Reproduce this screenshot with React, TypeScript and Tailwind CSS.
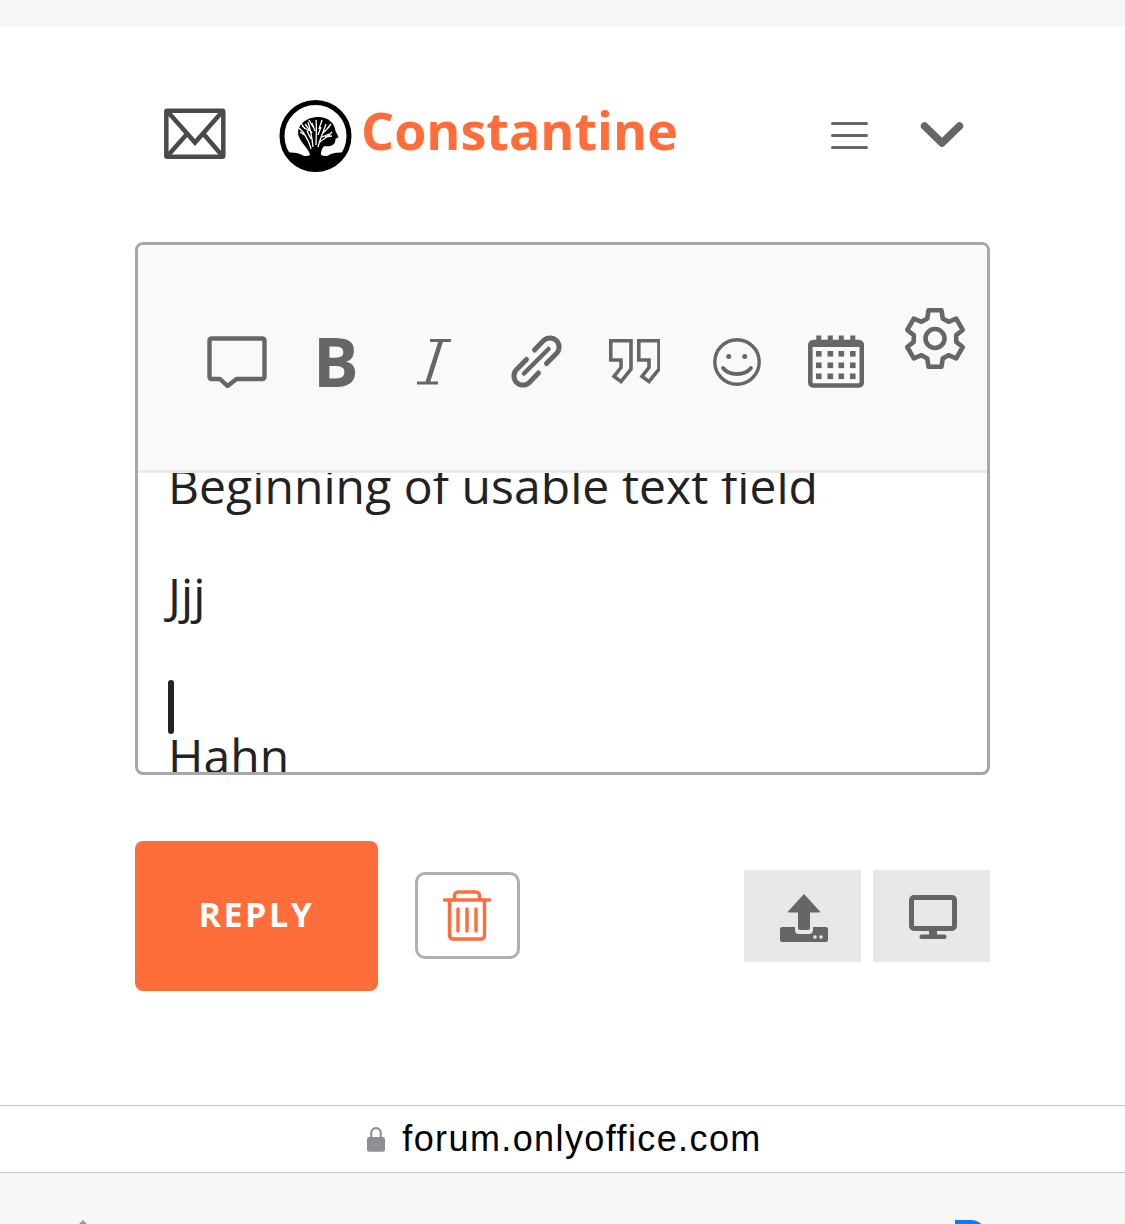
import React from "react";

const gearPath = (() => {
  const c = 31;
  const parts: string[] = [];
  for (let i = 0; i < 6; i++) {
    const a = -90 + i * 60;
    const pts: [number, number][] = [
      [a - 21, 21.5],
      [a - 13, 29],
      [a + 13, 29],
      [a + 21, 21.5],
    ];
    pts.forEach(([deg, r]) => {
      const t = (deg * Math.PI) / 180;
      parts.push(`${parts.length ? "L" : "M"}${(c + r * Math.cos(t)).toFixed(2)} ${(c + 0.5 + r * Math.sin(t)).toFixed(2)}`);
    });
  }
  return parts.join(" ") + "Z";
})();

function Mail() {
  return (
    <svg width="62" height="52" viewBox="0 0 62 52" fill="none" stroke="#4a4a4a" strokeWidth="4.5">
      <rect x="2.3" y="2.8" width="57" height="46" rx="1" />
      <path d="M4 4L31 34.5L58 4" />
      <path d="M3.5 48L22.5 26.5M58.5 48L40 26.5" />
    </svg>
  );
}

function Logo() {
  return (
    <svg width="80" height="80" viewBox="0 0 80 80" className="shrink-0">
      <circle cx="40.5" cy="41" r="33.5" fill="#fff" stroke="#000" strokeWidth="5" />
      <path d="M35 60C34 54 27 49 24 42C20 31 31 22 43 22C54 22 60 29 60.5 36L63.5 42L60.5 44C60.5 50 56 52 50 51C47 52 46 56 46 60C50 62 53 61 56 59C61 57 65 58 70 57C64 68 52 75 40.5 75C29 75 17 68 11 57C16 58 20 57 25 59C28 61 32 62 35 60Z" fill="#000" />
      <path d="M36 54C34 46 31 42 28 37M38 52C37 42 36 36 33 27M41 50C41 42 42 34 41 25M43 52C45 44 48 38 51 29M45 47C48 44 52 43 57 37M31 41L25 37M34 36L27 31M30 34L26 28M38 32L34 25M37 38L30 29M44 34L47 25M48 38L55 31M47 42L54 39M52 34L56 29M29 38L24 33M36 44L32 36M43 40L46 32M40 36L37 28M50 42L57 41" fill="none" stroke="#fff" strokeWidth="1.3" />
    </svg>
  );
}

function Chat() {
  return (
    <svg width="60" height="52" viewBox="0 0 60 52" fill="none" stroke="#666" strokeWidth="4.4" strokeLinejoin="round">
      <path d="M4.5 2.5H55.5a2 2 0 0 1 2 2V41a2 2 0 0 1-2 2H29.5L20.5 50 13 43H4.5a2 2 0 0 1-2-2V4.5a2 2 0 0 1 2-2z" />
    </svg>
  );
}

function Italic() {
  return (
    <svg width="34" height="46" viewBox="0 0 34 46" fill="none" stroke="#666">
      <path d="M13 1.5H34M0 44H21" strokeWidth="3" />
      <path d="M24 1.5L10.5 44" strokeWidth="4.5" />
    </svg>
  );
}

function LinkIcon() {
  return (
    <svg width="65" height="65" viewBox="0 0 65 65" fill="none" stroke="#666" strokeWidth="5" strokeLinecap="round">
      <path d="M30.5 21L39.6 11.6A9 9 0 0 1 52.4 24.4L42.5 34.5" />
      <path d="M22.5 30.5L12.6 40.6A9 9 0 0 0 25.4 53.4L34.5 44" />
      <path d="M20 44.5L44.5 20" strokeWidth="4.5" />
    </svg>
  );
}

function Quote() {
  return (
    <svg width="51" height="45" viewBox="0 0 51 45" fill="none" stroke="#666" strokeWidth="3.6">
      <path d="M1.8 1.8H22V30L12 42.5L5 37.5L12 28.5V21H1.8Z" />
      <path d="M29.8 1.8H50V30L40 42.5L33 37.5L40 28.5V21H29.8Z" />
    </svg>
  );
}

function Smile() {
  return (
    <svg width="48" height="48" viewBox="0 0 48 48" fill="none" stroke="#666">
      <circle cx="24" cy="24" r="22.2" strokeWidth="3.4" />
      <circle cx="15.7" cy="18.5" r="2.5" fill="#666" stroke="none" />
      <circle cx="31.7" cy="18.5" r="2.5" fill="#666" stroke="none" />
      <path d="M10 30C16 38 32 38 38 30" strokeWidth="3.8" strokeLinecap="round" />
    </svg>
  );
}

function Calendar() {
  const xs = [8, 19.5, 30.5, 42];
  const ys = [16, 27.5, 38.5];
  return (
    <svg width="56" height="53" viewBox="0 0 56 53" fill="#666">
      <rect x="2.3" y="7" width="51.5" height="43.5" rx="3" fill="none" stroke="#666" strokeWidth="4.6" />
      <rect x="2" y="6" width="52" height="6" />
      {xs.map((x) => (
        <rect key={`t${x}`} x={x + 0.3} y="0.5" width="5" height="7" />
      ))}
      {xs.map((x) =>
        ys.map((y) => <rect key={`${x}-${y}`} x={x} y={y} width="5.6" height="5.6" />)
      )}
    </svg>
  );
}

function Gear() {
  return (
    <svg width="62" height="64" viewBox="0 0 62 64" fill="none" stroke="#666" strokeWidth="4.6" strokeLinejoin="round">
      <path d={gearPath} />
      <circle cx="31" cy="31.5" r="9.5" />
    </svg>
  );
}

function Trash() {
  return (
    <svg width="48" height="51" viewBox="0 0 48 51" fill="none" stroke="#ff6d3b" strokeWidth="3.4" strokeLinecap="round">
      <path d="M1.5 10H46.5" />
      <path d="M11.5 9V5.5a3.5 3.5 0 0 1 3.5-3.5H33a3.5 3.5 0 0 1 3.5 3.5V9" />
      <path d="M6.5 10V45.5a3.5 3.5 0 0 0 3.5 3.5H38a3.5 3.5 0 0 0 3.5-3.5V10" />
      <path d="M15 19V41M24 19V41M33 19V41" />
    </svg>
  );
}

function Upload() {
  return (
    <svg width="48" height="48" viewBox="0 0 48 48">
      <path d="M2 33H15V36a4 4 0 0 0 4 4H29a4 4 0 0 0 4-4V33H46a2 2 0 0 1 2 2V46a2 2 0 0 1-2 2H2a2 2 0 0 1-2-2V35a2 2 0 0 1 2-2Z" fill="#666" />
      <path d="M24 0L40 17.5a.5.5 0 0 1-.5 1H30V34a2 2 0 0 1-2 2H20a2 2 0 0 1-2-2V18.5H8.5a.5.5 0 0 1-.5-1Z" fill="#666" />
      <circle cx="35" cy="43" r="1.8" fill="#e8e8e8" />
      <circle cx="41" cy="43" r="1.8" fill="#e8e8e8" />
    </svg>
  );
}

function Monitor() {
  return (
    <svg width="48" height="44" viewBox="0 0 48 44" fill="#666">
      <rect x="2.5" y="2.5" width="43" height="31" rx="2.5" fill="none" stroke="#666" strokeWidth="5" />
      <rect x="20" y="34" width="8" height="7" />
      <rect x="10.5" y="39.5" width="27" height="4.5" rx="2" />
    </svg>
  );
}

export default function App() {
  return (
    <div className="w-[1125px] h-[1224px] overflow-hidden flex flex-col bg-white font-['Open_Sans',sans-serif]">
      <div className="h-[26px] shrink-0 bg-[#f6f6f6]" />

      <main className="px-[135px] shrink-0">
        <header className="h-[216px] flex items-center pl-[29px]">
          <Mail />
          <div className="ml-[49px] mt-[2px] flex items-center">
            <Logo />
            <span className="ml-[6px] -mt-[10px] text-[52px] leading-none font-bold text-[#ff6d3b]">Constantine</span>
          </div>
          <div className="ml-auto mr-[26px] mt-[2px] flex items-center">
            <div className="w-[37px] flex flex-col gap-[9px]">
              <div className="h-[3px] rounded-full bg-[#666]" />
              <div className="h-[3px] rounded-full bg-[#666]" />
              <div className="h-[3px] rounded-full bg-[#666]" />
            </div>
            <svg className="ml-[52px]" width="44" height="28" viewBox="0 0 44 28" fill="none" stroke="#666" strokeWidth="7.5" strokeLinecap="round" strokeLinejoin="round">
              <path d="M4.5 5L22 22L39.5 5" />
            </svg>
          </div>
        </header>

        <section className="h-[533px] border-[3px] border-[#a8a8a8] rounded-[8px] overflow-hidden flex flex-col">
          <div className="h-[228px] shrink-0 bg-[#f9f9f9] border-b-[3px] border-[#ebebeb] flex items-center pl-[69px] pt-[8px]">
            <Chat />
            <span className="ml-[46px] w-[39px] text-[68px] leading-none font-bold text-[#666] -mt-[2px]">B</span>
            <div className="ml-[65px]"><Italic /></div>
            <div className="ml-[53px]"><LinkIcon /></div>
            <div className="ml-[40px]"><Quote /></div>
            <div className="ml-[53px]"><Smile /></div>
            <div className="ml-[47px]"><Calendar /></div>
            <div className="ml-[40px] self-start mt-[54px]"><Gear /></div>
          </div>
          <div className="flex-1 overflow-hidden pl-[30px] text-[#222] text-[48px] leading-[54.3px] tracking-[0.07px] whitespace-nowrap">
            <div className="-mt-[14px]">
              <div>Beginning of usable text field</div>
              <div className="h-[54.3px]" />
              <div>Jjj</div>
              <div className="h-[54.3px]" />
              <div className="h-[49px]">
                <div className="w-[6px] h-[54px] mt-[4px] rounded-full bg-[#222]" />
              </div>
              <div>Hahn</div>
            </div>
          </div>
        </section>

        <div className="mt-[66px] flex items-center">
          <button className="w-[243px] h-[150px] rounded-[8px] bg-[#ff6d3b] text-white text-[34px] font-bold tracking-[2.5px] pb-[3px]">REPLY</button>
          <button className="ml-[37px] mb-[2px] w-[105px] h-[87px] rounded-[10px] border-[3px] border-[#b0b0b0] bg-white flex items-center justify-center pr-[2px]">
            <Trash />
          </button>
          <div className="ml-auto flex gap-[12px]">
            <div className="w-[117px] h-[92px] bg-[#e8e8e8] flex items-center justify-center pl-[3px] pt-[4px]"><Upload /></div>
            <div className="w-[117px] h-[92px] bg-[#e8e8e8] flex items-center justify-center pl-[2px] pt-[2px]"><Monitor /></div>
          </div>
        </div>
      </main>

      <footer className="mt-[114px] h-[68px] shrink-0 border-y border-[#c4c4c4] bg-white flex items-center justify-center gap-[17px] pl-[4px]">
        <svg width="18" height="28" viewBox="0 0 19 28" fill="#8e8e93">
          <path d="M4.5 13V7.5a5 5 0 0 1 10 0V13" fill="none" stroke="#8e8e93" strokeWidth="2.2" />
          <rect x="0" y="12" width="19" height="15.5" rx="2.5" />
        </svg>
        <span className="font-['Liberation_Sans',sans-serif] text-[36px] leading-none text-black tracking-[1.4px]">forum.onlyoffice.com</span>
      </footer>

      <div className="flex-1 bg-[#f7f7f7] flex justify-between items-start pt-[47px] pl-[77px] pr-[142px]">
        <svg width="12" height="5" viewBox="0 0 12 5" fill="#9a9a9a"><path d="M6 0L11 5H1Z" /></svg>
        <svg width="28" height="5" viewBox="0 0 28 5" fill="#0a7aff"><path d="M0 0H16C20 0 24 2 28 5H0Z" /></svg>
      </div>
    </div>
  );
}
